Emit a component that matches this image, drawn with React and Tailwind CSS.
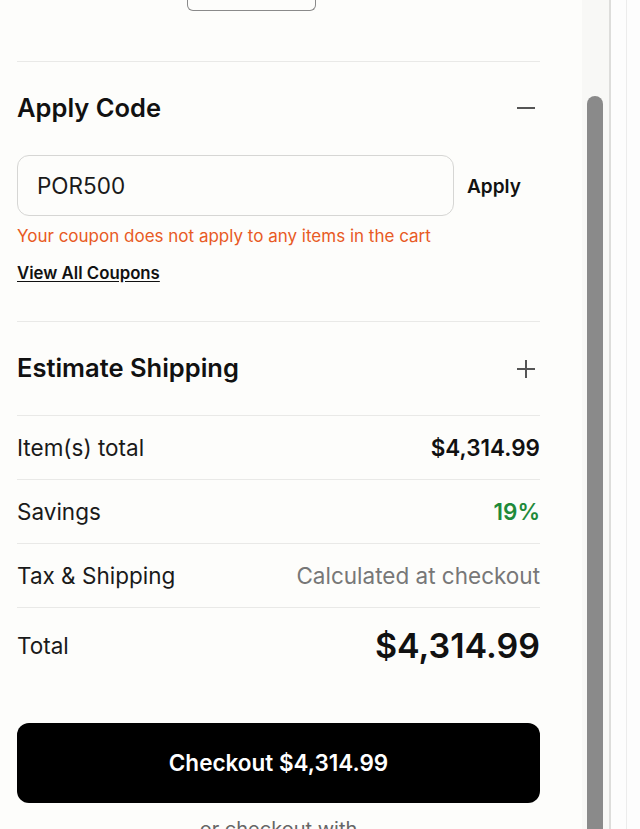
import React from "react";

const font = { fontFamily: 'Inter, "Noto Sans", Arial, sans-serif' };

function Row({ label, value, valueClass }) {
  return (
    <div className="flex h-[64px] items-center justify-between border-b border-[#e9e9e7]">
      <span className="text-[22.5px] text-[#1a1a1a]">{label}</span>
      <span className={valueClass}>{value}</span>
    </div>
  );
}

export default function App() {
  return (
    <div className="flex h-[829px] w-[640px] overflow-hidden bg-[#fdfdfb]" style={font}>
      <div className="w-[582px] shrink-0 pl-[17px] pr-[42px]">
        <div className="ml-[170px] h-[11px] w-[129px] rounded-b-[6px] border-x-[1.5px] border-b-[1.5px] border-[#8a8a8a]" />
        <div className="mt-[50px] border-t border-[#e9e9e7]" />
        <div className="mt-[16px] flex h-[60px] items-center justify-between">
          <span className="text-[25.5px] font-semibold text-[#111]">Apply Code</span>
          <svg width="20" height="20" viewBox="0 0 20 20" className="mr-[4px]">
            <line x1="1" y1="10" x2="19" y2="10" stroke="#555" strokeWidth="2" />
          </svg>
        </div>
        <div className="mt-[17px] flex items-center">
          <div className="flex h-[61px] w-[437px] items-center rounded-[12px] border border-[#d6d6d4] bg-[#fdfdfb] pl-[19px] text-[22.5px] text-[#1a1a1a]">
            POR500
          </div>
          <span className="ml-[13px] mt-[3px] text-[19px] font-semibold text-[#111]">Apply</span>
        </div>
        <div className="mt-[10px] text-[17px] leading-[20px] text-[#e85a24]">
          Your coupon does not apply to any items in the cart
        </div>
        <div className="mt-[17px] text-[16.8px] font-semibold leading-[20px] text-[#111] underline underline-offset-2">
          View All Coupons
        </div>
        <div className="mt-[38px] border-t border-[#e9e9e7]" />
        <div className="flex h-[94px] items-center justify-between border-b border-[#e9e9e7]">
          <span className="text-[25.5px] font-semibold text-[#111]">Estimate Shipping</span>
          <svg width="20" height="20" viewBox="0 0 20 20" className="mr-[4px]">
            <line x1="1" y1="10" x2="19" y2="10" stroke="#555" strokeWidth="2" />
            <line x1="10" y1="1" x2="10" y2="19" stroke="#555" strokeWidth="2" />
          </svg>
        </div>
        <Row label="Item(s) total" value="$4,314.99" valueClass="text-[22.5px] font-semibold text-[#111]" />
        <Row label="Savings" value="19%" valueClass="text-[22.5px] font-semibold text-[#1f8a3a]" />
        <Row label="Tax & Shipping" value="Calculated at checkout" valueClass="text-[22.5px] text-[#777]" />
        <div className="flex h-[75px] items-center justify-between">
          <span className="text-[22.5px] text-[#1a1a1a]">Total</span>
          <span className="text-[34px] font-semibold text-[#111]">$4,314.99</span>
        </div>
        <div className="mt-[40px] flex h-[80px] items-center justify-center rounded-[12px] bg-black text-[22.5px] font-semibold text-white">
          Checkout $4,314.99
        </div>
        <div className="mt-[14px] text-center text-[20px] leading-[24px] text-[#666]">or checkout with</div>
      </div>
      <div className="w-[27px] shrink-0 bg-[#f8f8f6] pl-[5px] pt-[96px]">
        <div className="h-[800px] w-[16px] rounded-t-full bg-[#8a8a8a]" />
      </div>
      <div className="w-[2px] shrink-0 bg-[#dddddb]" />
      <div className="w-[15px] shrink-0 bg-[#fdfdfd]" />
      <div className="w-[1px] shrink-0 bg-[#ececec]" />
      <div className="flex-1 bg-[#fdfdfd]" />
    </div>
  );
}
